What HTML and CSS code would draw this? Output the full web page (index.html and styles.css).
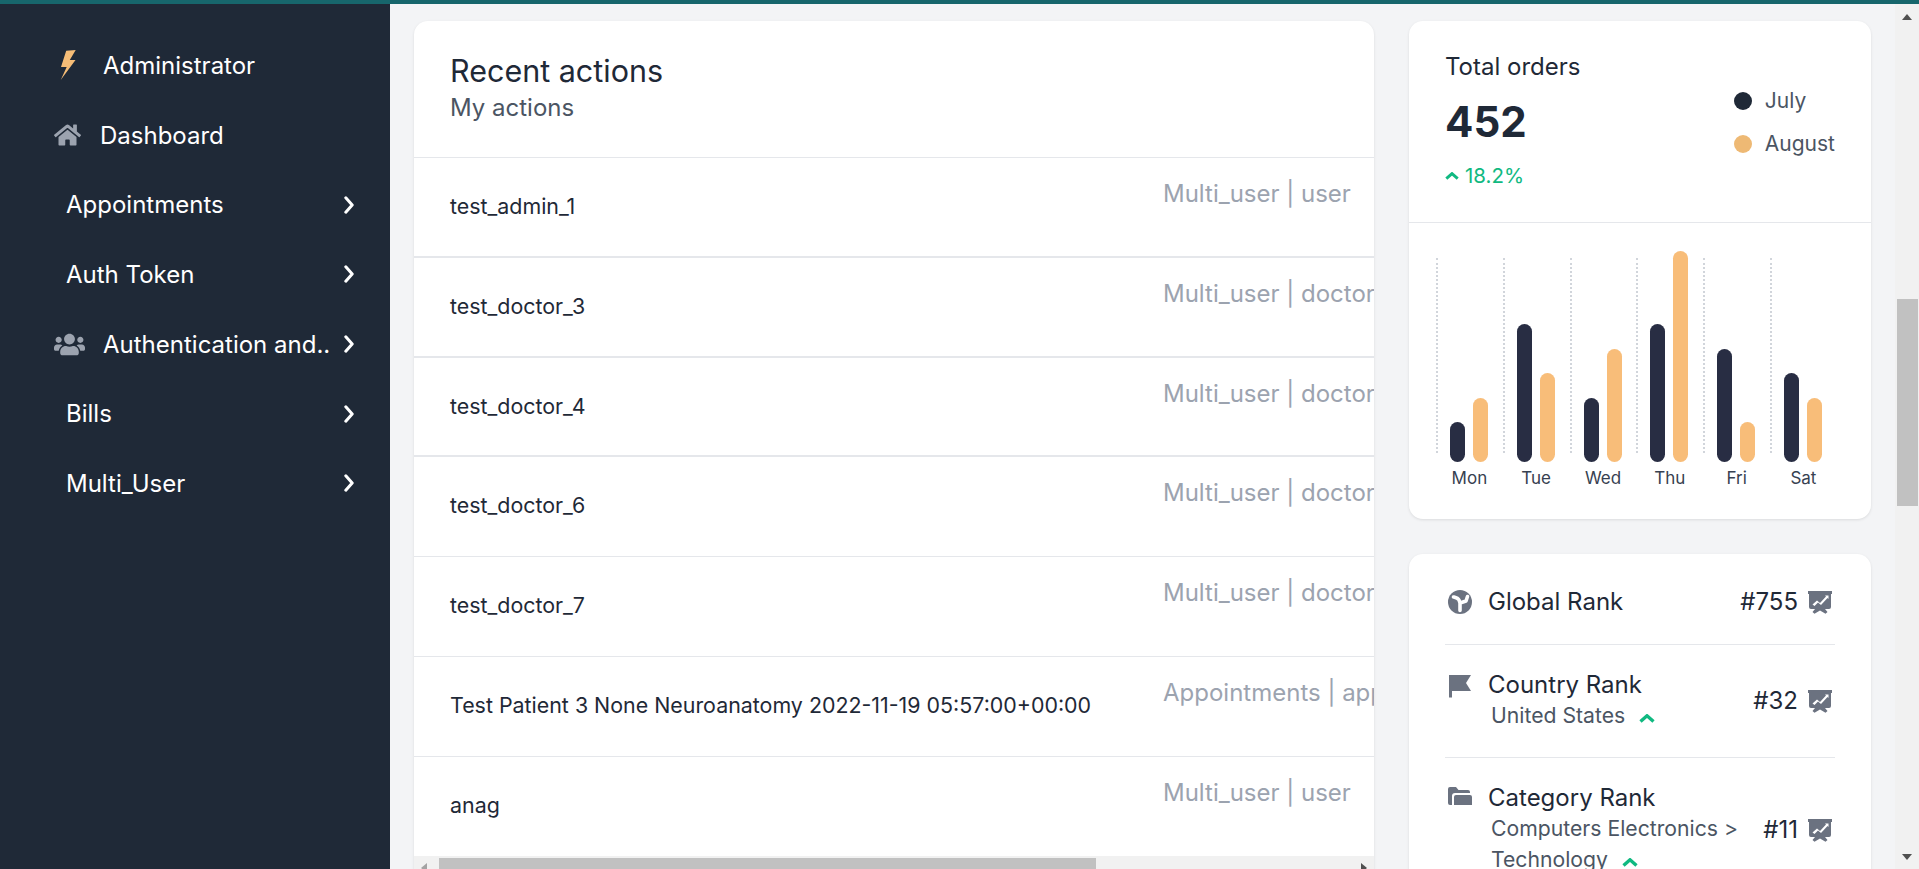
FILE: index.html
```html
<!DOCTYPE html>
<html lang="en">
<head>
<meta charset="utf-8">
<title>Dashboard</title>
<link rel="stylesheet" href="styles.css">
</head>
<body>
<svg class="defs" width="0" height="0" aria-hidden="true">
  <symbol id="chev" viewBox="0 0 10 18"><path d="M1.8 1.8 8.2 9 1.8 16.2" fill="none" stroke="currentColor" stroke-width="3" stroke-linecap="round" stroke-linejoin="round"/></symbol>
  <symbol id="up" viewBox="0 0 16 9"><path d="M1.5 7.5 8 1.8l6.500 5.700" fill="none" stroke="currentColor" stroke-width="3.400" stroke-linejoin="miter"/></symbol>
  <symbol id="pres" viewBox="0 0 24 23"><path d="M0 0h24v3h-1v13a2 2 0 0 1-2 2h-4l2.500 3-2 1.800L12 19.500l-5.500 3.300-2-1.800L7 18H3a2 2 0 0 1-2-2V3H0z" fill="#6b7280"/><path d="M4.500 13.500 9 9.500l3 2.500 6-6.500-1-1h3.500v3.500l-1-1-6.500 7-3-2.500-3.500 3.500z" fill="#fff"/></symbol>
</svg>
<div class="topline"></div>
<div class="app">
  <aside class="sidebar">
    <a class="nav-item nav-admin">
      <svg class="ic-bolt" viewBox="0 0 16 30"><path fill="#f6bd77" d="M15.700 0 6.200.7 1 17h5.700L.7 30 15.500 10H9.800z"/></svg>
      <span>Administrator</span>
    </a>
    <a class="nav-item nav-dash">
      <svg class="ic-home" viewBox="0 0 576 512"><path fill="#9ca3af" d="M280.370 148.260 96 300.110V464a16 16 0 0 0 16 16l112.060-.29a16 16 0 0 0 15.920-16V368a16 16 0 0 1 16-16h64a16 16 0 0 1 16 16v95.640a16 16 0 0 0 16 16.050L464 480a16 16 0 0 0 16-16V300L295.670 148.260a12.190 12.190 0 0 0-15.300 0zM571.600 251.470 488 182.560V44.050a12 12 0 0 0-12-12h-56a12 12 0 0 0-12 12v72.610L318.470 43a48 48 0 0 0-61 0L4.340 251.470a12 12 0 0 0-1.600 16.900l25.500 31A12 12 0 0 0 45.150 301l235.220-193.740a12.190 12.190 0 0 1 15.300 0L530.900 301a12 12 0 0 0 16.900-1.600l25.500-31a12 12 0 0 0-1.700-16.930z"/></svg>
      <span>Dashboard</span>
    </a>
    <a class="nav-item nav-plain"><span>Appointments</span><svg class="chev"><use href="#chev"/></svg></a>
    <a class="nav-item nav-plain"><span>Auth Token</span><svg class="chev"><use href="#chev"/></svg></a>
    <a class="nav-item nav-auth">
      <svg class="ic-users" viewBox="0 0 640 512"><path fill="#9ca3af" d="M96 224c35.300 0 64-28.700 64-64s-28.700-64-64-64-64 28.700-64 64 28.700 64 64 64zm448 0c35.300 0 64-28.700 64-64s-28.700-64-64-64-64 28.700-64 64 28.700 64 64 64zm32 32h-64c-17.600 0-33.500 7.100-45.100 18.600 40.300 22.100 68.900 62 75.100 109.400h66c17.700 0 32-14.300 32-32v-32c0-35.300-28.700-64-64-64zm-256 0c61.900 0 112-50.100 112-112S381.900 32 320 32 208 82.100 208 144s50.100 112 112 112zm76.800 32h-8.300c-20.800 10-43.900 16-68.500 16s-47.600-6-68.500-16h-8.300C179.600 288 128 339.600 128 403.200V432c0 26.500 21.500 48 48 48h288c26.500 0 48-21.500 48-48v-28.800c0-63.600-51.600-115.200-115.200-115.200zm-223.700-13.400C161.500 263.100 145.600 256 128 256H64c-35.300 0-64 28.700-64 64v32c0 17.700 14.300 32 32 32h65.900c6.300-47.400 34.900-87.300 75.200-109.400z"/></svg>
      <span>Authentication and..</span><svg class="chev"><use href="#chev"/></svg>
    </a>
    <a class="nav-item nav-plain"><span>Bills</span><svg class="chev"><use href="#chev"/></svg></a>
    <a class="nav-item nav-plain"><span>Multi_User</span><svg class="chev"><use href="#chev"/></svg></a>
  </aside>

  <main class="content">
    <section class="card actions">
      <header class="actions-head">
        <h2>Recent actions</h2>
        <p>My actions</p>
      </header>
      <div class="row thick"><div class="row-name">test_admin_1</div><div class="row-cat">Multi_user | user</div></div>
      <div class="row thick"><div class="row-name">test_doctor_3</div><div class="row-cat">Multi_user | doctor</div></div>
      <div class="row thick"><div class="row-name">test_doctor_4</div><div class="row-cat">Multi_user | doctor</div></div>
      <div class="row"><div class="row-name">test_doctor_6</div><div class="row-cat">Multi_user | doctor</div></div>
      <div class="row"><div class="row-name">test_doctor_7</div><div class="row-cat">Multi_user | doctor</div></div>
      <div class="row"><div class="row-name">Test Patient 3 None Neuroanatomy 2022-11-19 05:57:00+00:00</div><div class="row-cat">Appointments | appointment</div></div>
      <div class="row"><div class="row-name">anag</div><div class="row-cat">Multi_user | user</div></div>
      <div class="hscroll">
        <i class="arrow-left"></i>
        <i class="hthumb"></i>
        <i class="arrow-right"></i>
      </div>
    </section>

    <div class="side">
      <section class="card orders">
        <div class="orders-head">
          <div class="orders-main">
            <div class="orders-title">Total orders</div>
            <div class="orders-num">452</div>
            <div class="orders-delta"><svg class="up-sm"><use href="#up"/></svg>18.2%</div>
          </div>
          <ul class="legend">
            <li><i class="dot dot-dark"></i>July</li>
            <li><i class="dot dot-orange"></i>August</li>
          </ul>
        </div>
        <div class="chart">
          <div class="day"><div class="bars"><i class="bar dark" style="height:40px"></i><i class="bar orange" style="height:64px"></i></div><span>Mon</span></div>
          <div class="day"><div class="bars"><i class="bar dark" style="height:138px"></i><i class="bar orange" style="height:89px"></i></div><span>Tue</span></div>
          <div class="day"><div class="bars"><i class="bar dark" style="height:64px"></i><i class="bar orange" style="height:113px"></i></div><span>Wed</span></div>
          <div class="day"><div class="bars"><i class="bar dark" style="height:138px"></i><i class="bar orange" style="height:211px"></i></div><span>Thu</span></div>
          <div class="day"><div class="bars"><i class="bar dark" style="height:113px"></i><i class="bar orange" style="height:40px"></i></div><span>Fri</span></div>
          <div class="day"><div class="bars"><i class="bar dark" style="height:89px"></i><i class="bar orange" style="height:64px"></i></div><span>Sat</span></div>
        </div>
      </section>

      <section class="card ranks">
        <div class="rank rank-global">
          <svg class="rank-ic" viewBox="0 0 24 24"><circle cx="12" cy="12" r="12" fill="#6b7280"/><path d="M5.500 7c2 .5 4.500 1 5.500 3l1 3 6-2 1.500-4.500M12 13v7.500" fill="none" stroke="#fff" stroke-width="3.600" stroke-linecap="round" stroke-linejoin="round"/></svg>
          <div class="rank-body"><div class="rank-title">Global Rank</div></div>
          <div class="rank-val">#755</div>
          <svg class="pres"><use href="#pres"/></svg>
        </div>
        <div class="rank rank-country">
          <svg class="rank-ic" viewBox="0 0 24 24"><path fill="#6b7280" d="M1 1h22l-5 8 5 8H4v6.500H1z"/></svg>
          <div class="rank-body"><div class="rank-title">Country Rank</div><div class="rank-sub">United States<svg class="up-md"><use href="#up"/></svg></div></div>
          <div class="rank-val">#32</div>
          <svg class="pres"><use href="#pres"/></svg>
        </div>
        <div class="rank rank-cat">
          <svg class="rank-ic" viewBox="0 0 24 24"><path fill="#6b7280" d="M2 3h6l2.500 3H20a2 2 0 0 1 2 2v1H7a3 3 0 0 0-3 3v9H2a2 2 0 0 1-2-2V5a2 2 0 0 1 2-2z"/><path fill="#6b7280" d="M8 11h14a2 2 0 0 1 2 2v8H6v-8a2 2 0 0 1 2-2z"/></svg>
          <div class="rank-body"><div class="rank-title">Category Rank</div><div class="rank-sub">Computers Electronics &gt;<br>Technology<svg class="up-md"><use href="#up"/></svg></div></div>
          <div class="rank-val">#11</div>
          <svg class="pres"><use href="#pres"/></svg>
        </div>
      </section>
    </div>
  </main>

  <div class="vscroll">
    <i class="arrow-up"></i>
    <i class="vthumb"></i>
    <i class="arrow-down"></i>
  </div>
</div>
</body>
</html>
```
FILE: styles.css
```css
* { box-sizing: border-box; }
html, body { height: 100%; }
body {
  margin: 0;
  display: flex;
  flex-direction: column;
  overflow: hidden;
  font-family: Inter, "Liberation Sans", sans-serif;
  color: #1f2937;
  background: #f3f4f6;
}
.defs { position: absolute; }
ul { list-style: none; margin: 0; padding: 0; }
h2, p { margin: 0; font-weight: 400; }
i { display: block; }

.topline { height: 4px; flex: none; background: #17666c; }
.app { flex: 1; min-height: 0; display: flex; }

/* Sidebar */
.sidebar {
  width: 390px;
  flex: none;
  background: #1f2937;
  color: #fff;
  padding-top: 26px;
  font-size: 24px;
}
.nav-item {
  display: flex;
  align-items: center;
  height: 69.600px;
  padding-right: 36px;
}
.nav-item span { white-space: nowrap; }
.nav-admin { height: 70.500px; }
.nav-plain { padding-left: 66px; justify-content: space-between; }
.nav-admin { padding-left: 60px; }
.nav-dash { padding-left: 54px; }
.nav-auth { padding-left: 54px; }
.ic-bolt { width: 16px; height: 30px; margin-right: 27px; }
.ic-home { width: 27px; height: 24px; margin-right: 19px; }
.ic-users { width: 31px; height: 25px; margin-right: 18px; }
.nav-auth span { flex: 1; }
.chev { width: 10px; height: 18px; flex: none; color: #fff; }

/* Content */
.content {
  flex: 1;
  min-width: 0;
  display: grid;
  grid-template-columns: 960px 462px;
  column-gap: 35px;
  padding: 17px 24px 0;
  overflow: hidden;
  align-items: start;
}
.card {
  background: #fff;
  border-radius: 14px;
  box-shadow: 0 1px 3px rgba(0, 0, 0, .1);
}
.actions { position: relative; overflow: hidden; height: 880px; }
.actions-head {
  height: 137px;
  padding: 30px 36px 0;
  border-bottom: 1px solid #e5e7eb;
}
.actions-head h2 { font-size: 30.500px; line-height: 40px; color: #1f2937; }
.actions-head p { font-size: 24px; line-height: 32px; color: #4b5563; margin-top: 1px; }

.row {
  display: grid;
  grid-template-columns: 713px 1fr;
  height: 99.800px;
  padding-left: 36px;
  border-bottom: 1px solid #e5e7eb;
  white-space: nowrap;
}
.row.thick { border-bottom-width: 2px; }
.row-name { font-size: 21.400px; line-height: 32px; padding-top: 32px; color: #1f2937; }
.row-cat { font-size: 24px; line-height: 32px; padding-top: 20px; color: #9ca3af; overflow: hidden; }

.hscroll {
  position: absolute;
  left: 0;
  right: 0;
  top: 835px;
  height: 24px;
  background: #f1f1f1;
}
.hthumb { position: absolute; left: 25px; top: 2px; width: 657px; height: 22px; background: #c1c1c1; }
.arrow-left {
  position: absolute; left: 7px; top: 7px; width: 0; height: 0;
  border: 5px solid transparent; border-left: 0; border-right: 6px solid #a3a3a3;
}
.arrow-right {
  position: absolute; right: 7px; top: 7px; width: 0; height: 0;
  border: 5px solid transparent; border-right: 0; border-left: 6px solid #505050;
}

/* Right column */
.side { display: flex; flex-direction: column; gap: 35px; }
.orders { height: 498px; }
.orders-head {
  height: 202px;
  padding: 28px 36px 0 36px;
  border-bottom: 1px solid #e5e7eb;
  display: flex;
  justify-content: space-between;
}
.orders-title { font-size: 24px; line-height: 36px; color: #1f2937; }
.orders-num { font-size: 42px; font-weight: 700; line-height: 52px; margin-top: 11px; color: #1f2937; }
.orders-delta { display: flex; align-items: center; font-size: 20.500px; line-height: 30px; margin-top: 13px; color: #10b981; }
.up-sm { width: 14px; height: 8px; margin-right: 6px; color: #10b981; }
.legend { padding-top: 30px; font-size: 21px; color: #4b5563; }
.legend li { display: flex; align-items: center; height: 43px; }
.dot { width: 18px; height: 18px; border-radius: 50%; margin-right: 13px; }
.dot-dark { background: #1f2937; }
.dot-orange { background: #eeb974; }

.chart { display: flex; padding: 28px 0 0 27px; }
.day { width: 66.800px; display: flex; flex-direction: column; position: relative; }
.day::before {
  content: "";
  position: absolute;
  left: 0;
  top: 7px;
  height: 195px;
  border-left: 2px dotted #d1d5db;
}
.bars { height: 211px; display: flex; align-items: flex-end; gap: 8px; padding-left: 14px; }
.bar { width: 15px; border-radius: 8px; }
.bar.dark { background: #282d43; }
.bar.orange { background: #f8bd79; }
.day span { font-size: 17px; line-height: 24px; text-align: center; margin-top: 4px; color: #374151; }

.ranks { padding: 0 36px; height: 400px; }
.rank {
  display: flex;
  align-items: center;
  border-bottom: 1px solid #e5e7eb;
}
.rank:last-child { border-bottom: 0; }
.rank-global { height: 91px; padding-top: 6px; }
.rank-country { height: 113px; }
.rank-cat { height: 144px; }
.rank-ic { width: 24px; height: 24px; flex: none; margin-left: 3px; margin-right: 16px; }
.rank-country .rank-ic, .rank-cat .rank-ic { align-self: flex-start; }
.rank-country .rank-ic { margin-top: 29px; }
.rank-cat .rank-ic { margin-top: 26px; }
.rank-body { flex: 1; min-width: 0; }
.rank-country .rank-body { align-self: flex-start; padding-top: 24px; }
.rank-cat .rank-body { align-self: flex-start; padding-top: 24px; }
.rank-title { font-size: 24px; line-height: 32px; color: #1f2937; }
.rank-sub { font-size: 21.200px; line-height: 31px; margin-left: 3px; margin-top: -1px; color: #4b5563; }
.rank-val { font-size: 24px; line-height: 32px; color: #1f2937; margin-right: 10px; }
.pres { width: 24px; height: 23px; flex: none; margin-right: 3px; }
.up-md { width: 16px; height: 9px; margin-left: 14px; color: #10b981; }

/* Page scrollbar */
.vscroll { width: 24px; flex: none; position: relative; background: #f1f1f1; }
.vthumb { position: absolute; left: 2px; top: 295px; width: 21px; height: 207px; background: #c1c1c1; }
.arrow-up {
  position: absolute; left: 7px; top: 10px; width: 0; height: 0;
  border: 5.500px solid transparent; border-top: 0; border-bottom: 6px solid #505050;
}
.arrow-down {
  position: absolute; left: 7px; top: 850px; width: 0; height: 0;
  border: 5.500px solid transparent; border-bottom: 0; border-top: 6px solid #505050;
}
```
